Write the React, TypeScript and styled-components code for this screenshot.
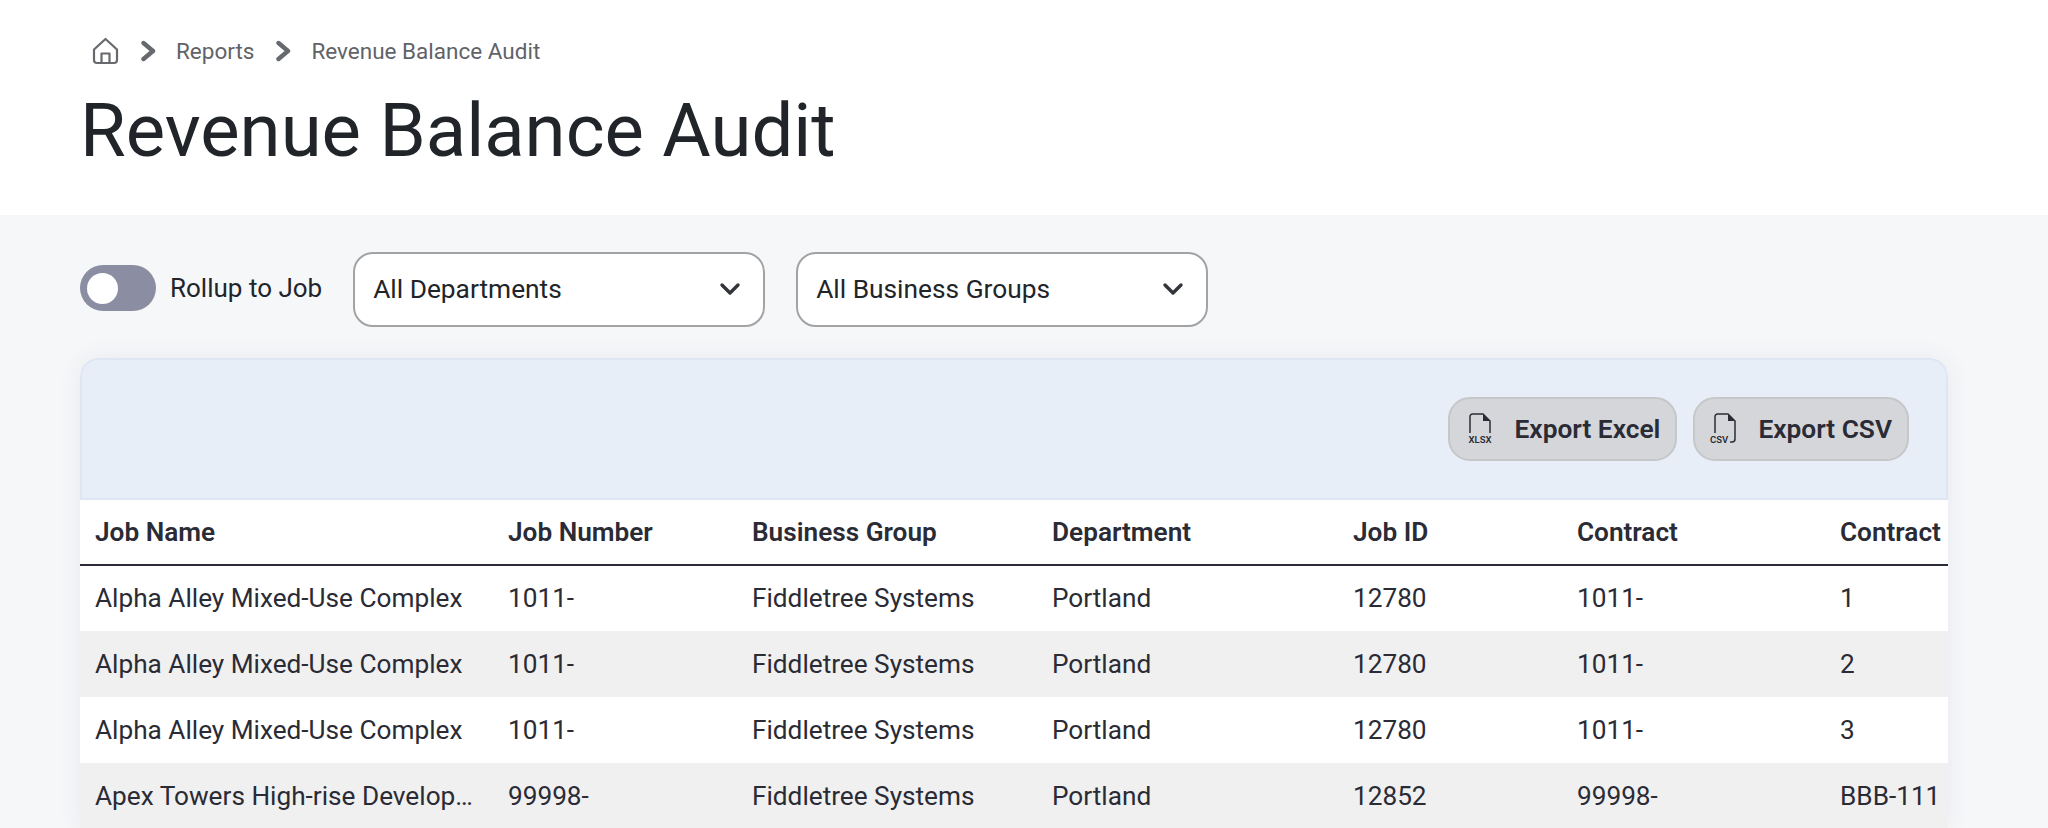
import { createGlobalStyle } from 'styled-components';
import styled from 'styled-components';

const GlobalStyle = createGlobalStyle`
  html, body {
    margin: 0;
    height: 828px;
    overflow: hidden;
    background-color: #f6f7f9;
    font-family: Roboto, "Liberation Sans", sans-serif;
    color: #212529;
  }
`;

const PageHeader = styled.header`
  background-color: #fff;
  height: 215px;
  padding: 36px 80px 0;
  box-sizing: border-box;
`;

const Breadcrumbs = styled.nav`
  display: flex;
  align-items: center;
  height: 30px;
  padding-left: 12px;
  color: #5f6368;
  font-size: 22.5px;
`;

const Crumb = styled.span`
  line-height: 30px;
`;

const Chevron = styled.svg`
  width: 18px;
  height: 22px;
  margin: 0 18px 0 21px;
`;

const Title = styled.h1`
  margin: 20px 0 0;
  font-size: 74.3px;
  font-weight: 400;
  line-height: 90px;
`;

const Content = styled.main`
  padding: 37px 100px 0 80px;
`;

const Filters = styled.div`
  display: flex;
  align-items: center;
  height: 75px;
`;

const Toggle = styled.span`
  display: flex;
  align-items: center;
  width: 76px;
  height: 46px;
  margin-top: -3px;
  padding-left: 7px;
  box-sizing: border-box;
  border-radius: 23px;
  background-color: #8b8ea3;
`;

const Knob = styled.span`
  width: 31px;
  height: 31px;
  border-radius: 50%;
  background-color: #fff;
`;

const ToggleLabel = styled.label`
  margin: -3px 31px 0 14px;
  font-size: 26px;
`;

const Select = styled.div`
  display: flex;
  align-items: center;
  justify-content: space-between;
  box-sizing: border-box;
  width: 412px;
  height: 75px;
  margin-right: 31px;
  padding: 0 22px 1px 18px;
  background-color: #fff;
  border: 2px solid #a2a3a5;
  border-radius: 20px;
  font-size: 26.3px;
`;

const Card = styled.section`
  margin-top: 31px;
  width: 1868px;
  background-color: #fff;
  border-radius: 18px 18px 0 0;
  box-shadow: 0 0 24px rgba(40, 50, 80, 0.07);
  overflow: hidden;
`;

const CardToolbar = styled.div`
  display: flex;
  justify-content: flex-end;
  gap: 16px;
  box-sizing: border-box;
  height: 142px;
  padding: 37px 37px 0 0;
  background-color: #e7eef7;
  border: 2px solid #dde6f2;
  border-radius: 18px 18px 0 0;
`;

const ExportButton = styled.button<{ $compact?: boolean }>`
  display: flex;
  align-items: center;
  gap: 22px;
  box-sizing: border-box;
  height: 64px;
  padding: 0 15px 0 ${(p) => (p.$compact ? '15px' : '17px')};
  background-color: #d5d6da;
  border: 2px solid #c5c7c9;
  border-radius: 22px;
  color: #2a2b35;
  font-family: inherit;
  font-size: 26.3px;
  font-weight: 600;
`;

const FileIcon = styled.svg`
  width: 26px;
  height: 32px;
`;

const Table = styled.table`
  width: 1945px;
  table-layout: fixed;
  border-collapse: collapse;
  color: #2a2b35;
  font-size: 26.2px;
`;

const HeadCell = styled.th`
  height: 65px;
  padding: 0 15px;
  box-sizing: border-box;
  border-bottom: 2px solid #2a2b35;
  text-align: left;
  font-weight: 600;
  white-space: nowrap;
  overflow: hidden;
`;

const Row = styled.tr<{ $shaded: boolean }>`
  background-color: ${(p) => (p.$shaded ? '#f0f0f1' : '#fff')};
`;

const Cell = styled.td`
  height: 66px;
  padding: 0 15px 1px;
  box-sizing: border-box;
  white-space: nowrap;
  overflow: hidden;
  text-overflow: ellipsis;
`;

const columns = [
  { name: 'Job Name', width: 413 },
  { name: 'Job Number', width: 244 },
  { name: 'Business Group', width: 300 },
  { name: 'Department', width: 301 },
  { name: 'Job ID', width: 224 },
  { name: 'Contract', width: 263 },
  { name: 'Contract', width: 200 },
];

const alpha = ['Alpha Alley Mixed-Use Complex', '1011-', 'Fiddletree Systems', 'Portland', '12780', '1011-'];

const rows = [
  [...alpha, '1'],
  [...alpha, '2'],
  [...alpha, '3'],
  ['Apex Towers High-rise Development', '99998-', 'Fiddletree Systems', 'Portland', '12852', '99998-', 'BBB-111'],
];

const HomeIcon = () => (
  <svg width="27" height="28" viewBox="0 0 27 28" fill="none" stroke="#66696d" strokeWidth="2.2" strokeLinejoin="round">
    <path d="M2 12.5 13.5 2 25 12.5V23a3 3 0 0 1-3 3H5a3 3 0 0 1-3-3Z" />
    <path d="M9.5 26V16.5h8V26" />
  </svg>
);

const BreadcrumbChevron = () => (
  <Chevron viewBox="0 0 18 22" fill="none" stroke="#66696d" strokeWidth="4.4" strokeLinecap="round" strokeLinejoin="round">
    <path d="M3.5 3l9.5 8-9.5 8" />
  </Chevron>
);

const SelectChevron = () => (
  <svg width="22" height="14" viewBox="0 0 22 14" fill="none" stroke="#33353b" strokeWidth="3.4" strokeLinecap="round" strokeLinejoin="round">
    <path d="M3 3l8 8 8-8" />
  </svg>
);

const XlsxIcon = () => (
  <FileIcon viewBox="0 0 26 32" fill="none">
    <path d="M3 20V3.5A2.5 2.5 0 0 1 5.5 1H16l7 7v12" stroke="#2a2b35" strokeWidth="1.5" />
    <path d="M16 1v7h7Z" fill="#2a2b35" />
    <text x="13" y="30" textAnchor="middle" fontSize="9.5" fontFamily="Roboto, sans-serif" fill="#2a2b35">XLSX</text>
  </FileIcon>
);

const CsvIcon = () => (
  <FileIcon viewBox="0 0 26 32" fill="none">
    <path d="M5 20V3.5A2.5 2.5 0 0 1 7.5 1H18l7 7v18a3 3 0 0 1-3 3h-2" stroke="#2a2b35" strokeWidth="1.5" />
    <path d="M18 1v7h7Z" fill="#2a2b35" />
    <text x="0" y="30" fontSize="9.5" fontFamily="Roboto, sans-serif" fill="#2a2b35">CSV</text>
  </FileIcon>
);

const App = () => {
  return (
    <>
      <GlobalStyle />
      <PageHeader>
        <Breadcrumbs>
          <HomeIcon />
          <BreadcrumbChevron />
          <Crumb>Reports</Crumb>
          <BreadcrumbChevron />
          <Crumb>Revenue Balance Audit</Crumb>
        </Breadcrumbs>
        <Title>Revenue Balance Audit</Title>
      </PageHeader>
      <Content>
        <Filters>
          <Toggle>
            <Knob />
          </Toggle>
          <ToggleLabel>Rollup to Job</ToggleLabel>
          <Select>
            All Departments
            <SelectChevron />
          </Select>
          <Select>
            All Business Groups
            <SelectChevron />
          </Select>
        </Filters>
        <Card>
          <CardToolbar>
            <ExportButton>
              <XlsxIcon />
              Export Excel
            </ExportButton>
            <ExportButton $compact>
              <CsvIcon />
              Export CSV
            </ExportButton>
          </CardToolbar>
          <Table>
            <colgroup>
              {columns.map((column, index) => (
                <col key={`${index}_col`} width={column.width} />
              ))}
            </colgroup>
            <thead>
              <tr>
                {columns.map((column, index) => (
                  <HeadCell key={`${index}_head`}>{column.name}</HeadCell>
                ))}
              </tr>
            </thead>
            <tbody>
              {rows.map((row, rowIndex) => (
                <Row key={`${rowIndex}_row`} $shaded={rowIndex % 2 === 1}>
                  {row.map((value, index) => (
                    <Cell key={`${index}_cell`}>{value}</Cell>
                  ))}
                </Row>
              ))}
            </tbody>
          </Table>
        </Card>
      </Content>
    </>
  );
};

export default App;
